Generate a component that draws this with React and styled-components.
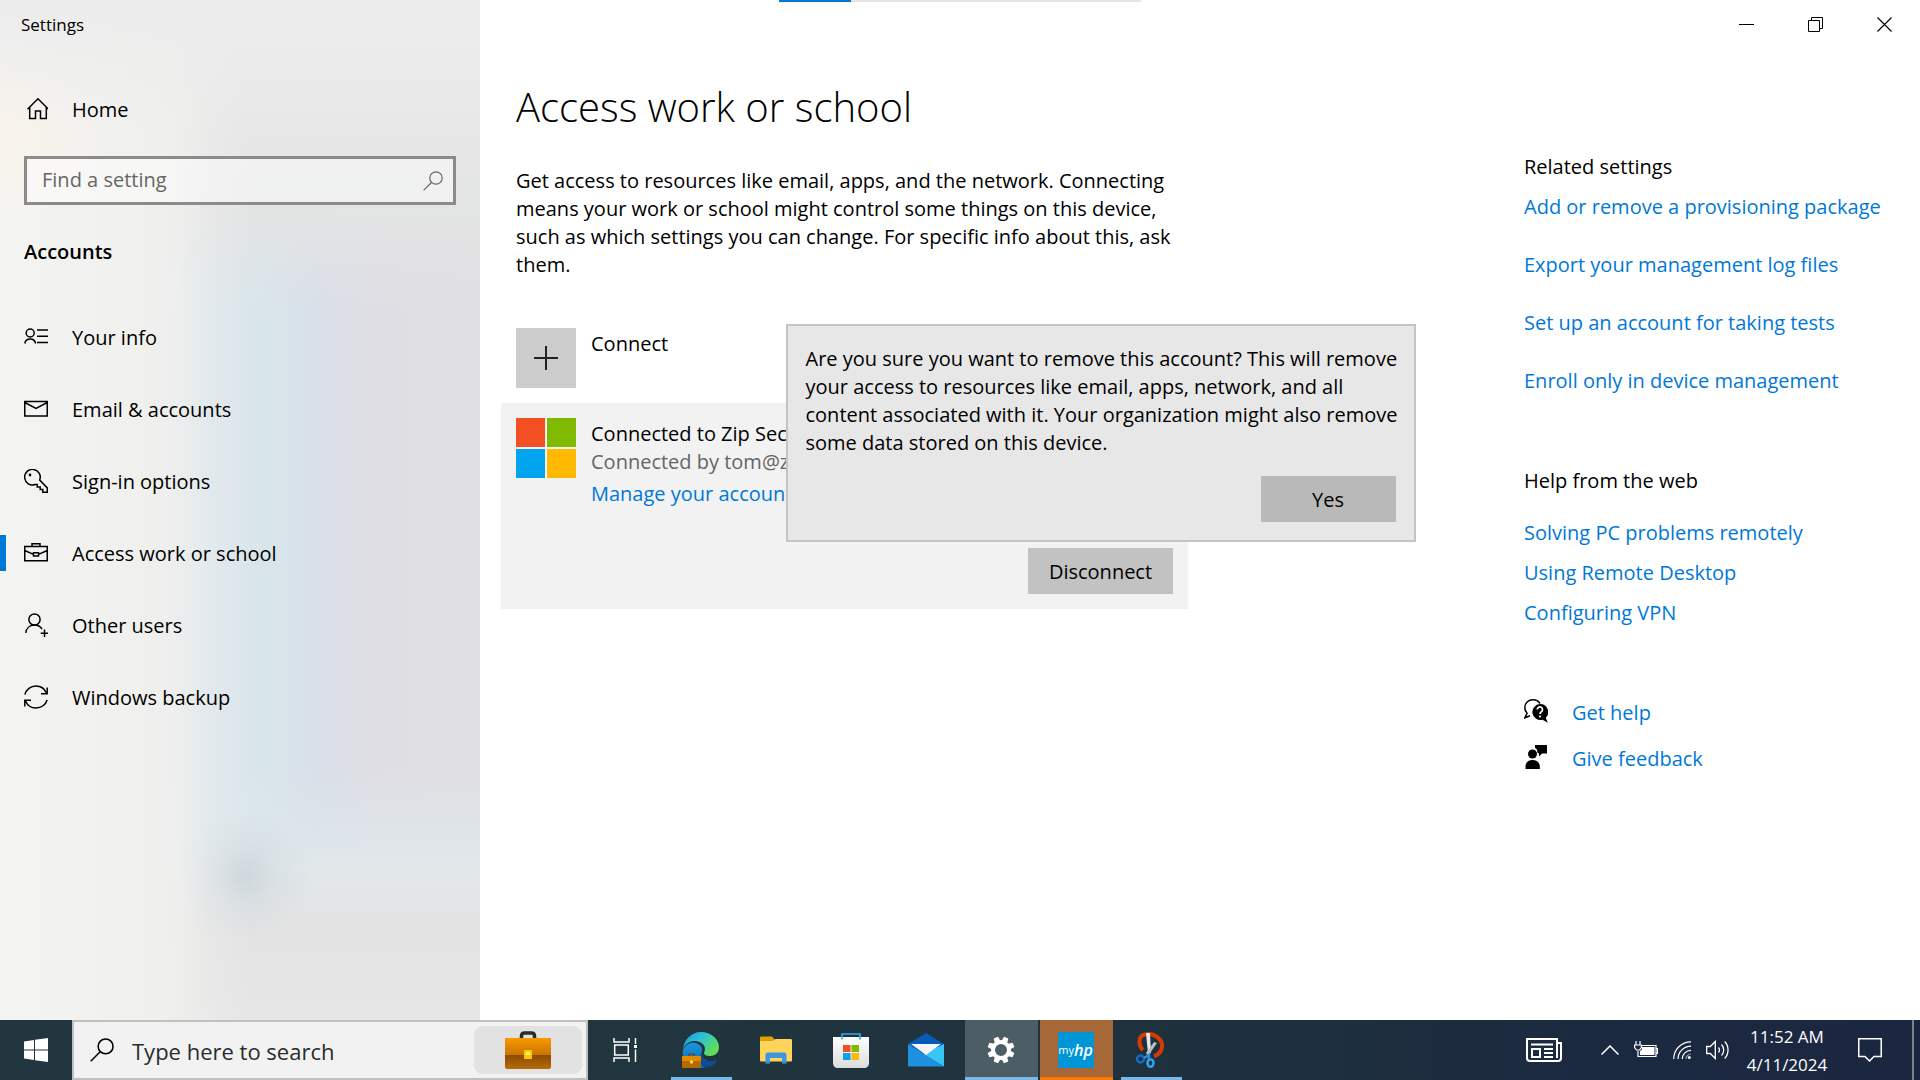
import React, { useState } from 'react';
import styled, { createGlobalStyle } from 'styled-components';

const GlobalStyle = createGlobalStyle`
  * {
    box-sizing: border-box;
  }
  body {
    margin: 0;
    background: white;
    color: black;
    font-family: 'Open Sans', 'Noto Sans', sans-serif;
    font-size: 20px;
    line-height: 28px;
  }
  h1, h2, p, ul {
    margin: 0;
    padding: 0;
    font-weight: 400;
    font-size: inherit;
  }
  ul {
    list-style: none;
  }
  a {
    color: inherit;
    text-decoration: none;
  }
  button {
    border: 0;
    padding: 0;
    font: inherit;
    color: inherit;
    background: none;
  }
  svg {
    display: block;
    flex: none;
  }
`;

const Desktop = styled.div`
  display: flex;
  flex-direction: column;
  min-height: 100vh;
`;

const SettingsWindow = styled.div`
  flex: 1;
  display: grid;
  grid-template-columns: 480px 1fr;
`;

/* ---------- sidebar ---------- */

const Sidebar = styled.aside`
  background:
    radial-gradient(ellipse 110px 80px at 0 140px, rgba(250, 243, 230, 0.7), transparent),
    linear-gradient(180deg, #ececec 0, rgba(236, 236, 236, 0.5) 70px, rgba(236, 236, 236, 0) 130px),
    linear-gradient(90deg, #f4f4f2 0, #f0f0ee 140px, rgba(240, 240, 238, 0.85) 175px, rgba(240, 240, 238, 0.3) 210px, rgba(240, 240, 238, 0) 250px),
    radial-gradient(ellipse 70px 65px at 242px 875px, rgba(196, 207, 213, 0.7), rgba(200, 211, 217, 0.3) 50%, rgba(200, 211, 217, 0)),
    linear-gradient(180deg, #ebebeb 0, #e7e7e7 130px, #e3e4e4 210px, rgba(226, 228, 230, 0) 310px),
    linear-gradient(0deg, #e6e6e6 0, #e3e3e3 95px, #e2e8ea 150px, rgba(222, 231, 236, 0.7) 185px, rgba(222, 231, 236, 0) 250px),
    linear-gradient(90deg, #dde7ed 0, #dce6ec 225px, #d8e5eb 265px, #d9dfe8 320px, #dfdee4 375px, #e0dfe2 480px);
`;
const WindowTitle = styled.div`
  display: flex;
  align-items: center;
  height: 48px;
  padding: 2px 0 0 21px;
  font-size: 17px;
`;
const NavLink = styled.a`
  position: relative;
  display: flex;
  align-items: center;
  gap: 24px;
  height: 72px;
  padding-left: 24px;
  ${(props) =>
    props.$active &&
    `
    &::before {
      content: '';
      position: absolute;
      left: 0;
      top: 18px;
      width: 6px;
      height: 36px;
      background: #0078d7;
    }
  `}
`;
const NavLabel = styled.span`
  padding-top: 2px;
`;
const HomeLink = styled(NavLink)`
  height: 48px;
  margin-top: 37px;
`;
const SearchBox = styled.label`
  display: flex;
  align-items: center;
  height: 49px;
  margin: 23px 24px;
  padding: 0 10px 0 15px;
  border: 3px solid #8b8b8b;
  background: rgba(255, 255, 255, 0.45);
  color: #666;
`;
const SearchInput = styled.input`
  flex: 1;
  min-width: 0;
  padding: 0 0 2px;
  border: 0;
  outline: 0;
  background: none;
  color: black;
  font: inherit;
  &::placeholder {
    color: #666;
    opacity: 1;
  }
`;
const SectionTitle = styled.h2`
  margin: 0 0 25px;
  padding-left: 24px;
  font-weight: 600;
  line-height: 48px;
`;

/* ---------- page ---------- */

const Page = styled.main`
  position: relative;
  min-width: 0;
`;
const Progress = styled.div`
  position: absolute;
  top: 0;
  left: 299px;
  width: 362px;
  height: 2px;
  background: #e5e5e5;
  &::before {
    content: '';
    display: block;
    width: 72px;
    height: 2px;
    background: #0078d7;
  }
`;
const WindowControls = styled.div`
  display: flex;
  justify-content: flex-end;
  height: 48px;
  padding-right: 1px;
`;
const ControlButton = styled.button`
  display: flex;
  align-items: center;
  justify-content: center;
  width: 69px;
`;
const Columns = styled.div`
  display: flex;
  justify-content: space-between;
`;
const Primary = styled.div`
  width: 687px;
  margin-left: 21px;
`;
const PageTitle = styled.h1`
  margin: 31px 15px 32px;
  font-size: 40px;
  font-weight: 300;
  line-height: 56px;
`;
const Intro = styled.p`
  padding-left: 15px;
`;
const ConnectRow = styled.div`
  display: flex;
  gap: 15px;
  margin-top: 49px;
  padding: 0 15px;
`;
const AddButton = styled.button`
  display: flex;
  align-items: center;
  justify-content: center;
  width: 60px;
  height: 60px;
  background: #ccc;
`;
const AccountCard = styled.section`
  margin-top: 15px;
  padding: 15px;
  background: #f2f2f2;
`;
const AccountRow = styled.div`
  display: flex;
  gap: 15px;
`;
const AccountText = styled.div`
  display: flex;
  flex-direction: column;
  padding-top: 2px;
`;
const Muted = styled.span`
  margin-bottom: 4px;
  color: #666;
`;
const TextLink = styled.a`
  color: #0078d7;
`;
const Actions = styled.div`
  position: relative;
  width: 145px;
  margin: 40px 0 0 auto;
`;
const ActionButton = styled.button`
  display: block;
  width: ${(props) => props.$width || '100%'};
  height: 46px;
  padding-top: 2px;
  background: ${(props) => props.$background || '#c2c2c2'};
`;
const Flyout = styled.div`
  position: absolute;
  bottom: calc(100% + 6px);
  left: 50%;
  width: 630px;
  padding: 19px 18px 18px;
  transform: translateX(-50%);
  border: 2px solid #c4c4c4;
  background: #e7e7e7;
  p {
    margin-bottom: 19px;
    white-space: nowrap;
  }
  button {
    margin-left: auto;
  }
`;
const Related = styled.aside`
  display: flex;
  flex-direction: column;
  width: 396px;
  padding-top: 105px;
`;
const LinkList = styled.ul`
  display: flex;
  flex-direction: column;
  gap: ${(props) => props.$gap};
  margin: ${(props) => props.$top} 0 72px;
  color: #0078d7;
`;
const HelpLink = styled.a`
  display: flex;
  align-items: flex-start;
  gap: 24px;
  svg {
    color: black;
  }
`;

/* ---------- taskbar ---------- */

const Taskbar = styled.footer`
  display: flex;
  height: 60px;
  color: white;
  background: linear-gradient(90deg, #21363f 0, #21363f 30%, #1e303d 65%, #1b2940 85%, #1b2740 100%);
`;
const StartButton = styled.button`
  display: flex;
  align-items: center;
  justify-content: center;
  width: 72px;
`;
const TaskSearch = styled.label`
  display: flex;
  align-items: center;
  gap: 18px;
  width: 516px;
  padding: 0 4px 0 16px;
  border: 2px solid #c0c0c0;
  background: #f2f2f2;
  color: black;
  font-size: 22px;
  input {
    padding: 2px 0 0;
  }
  input::placeholder {
    color: #2b2b2b;
  }
`;
const SearchHighlight = styled.span`
  display: flex;
  align-items: center;
  justify-content: center;
  width: 108px;
  height: 48px;
  border-radius: 9px;
  background: #e2e2e2;
`;
const Apps = styled.div`
  display: flex;
  gap: 2px;
`;
const AppButton = styled.button`
  position: relative;
  display: flex;
  align-items: center;
  justify-content: center;
  width: ${(props) => props.$width || '73px'};
  height: 60px;
  padding-right: 2px;
  background: ${(props) => props.$background || 'none'};
  &::after {
    content: '';
    position: absolute;
    left: ${(props) => (props.$background ? '0' : '6px')};
    right: ${(props) => (props.$background ? '0' : '6px')};
    bottom: 0;
    height: 3px;
    background: ${(props) => props.$line || 'transparent'};
  }
`;
const HpTile = styled.span`
  display: flex;
  align-items: center;
  justify-content: center;
  width: 36px;
  height: 36px;
  border-radius: 2px;
  background: #0096d6;
  font-size: 11px;
  line-height: 16px;
  b {
    font-size: 16px;
    font-style: italic;
    font-weight: 600;
  }
`;
const Tray = styled.div`
  display: flex;
  align-items: center;
  margin-left: auto;
`;
const TrayIcons = styled.div`
  display: flex;
  align-items: center;
  gap: 15px;
  margin-left: 39px;
`;
const Clock = styled.time`
  width: 116px;
  margin-right: 13px;
  padding-top: 1px;
  font-size: 17px;
  line-height: 28px;
  text-align: center;
`;
const ShowDesktop = styled.span`
  width: 8px;
  height: 60px;
  margin-left: 30px;
  border-left: 2px solid #7b8290;
`;

/* ---------- icons ---------- */

const Line = ({ size = 24, width = size, height = size, stroke = 1.5, children }) => (
  <svg
    width={width}
    height={height}
    viewBox={`0 0 ${width} ${height}`}
    fill="none"
    stroke="currentColor"
    strokeWidth={stroke}
    aria-hidden="true"
  >
    {children}
  </svg>
);

const HomeIcon = () => (
  <Line>
    <path d="M3.500 12.300 14 1.800 24.500 12.300M5.700 10v11.500h5.800V14h5v7.500h5.800V10" />
  </Line>
);
const InfoIcon = () => (
  <Line>
    <circle cx="6.2" cy="8" r="4" />
    <path d="M.8 18.500a5.500 5.500 0 0 1 10.800 0M13 5h11M13 11.200h11M13 17.500h11" />
  </Line>
);
const MailIcon = () => (
  <Line>
    <path d="M.75 4.500h22.500V19H.75zM.75 5.500 12 11.500l11.250-6" />
  </Line>
);
const KeyIcon = () => (
  <Line>
    <path d="M15.700 11a7.800 7.800 0 1 0-4.600 4.500h2.100v2.600h3v2.500h2.600v2.600h4.500v-4.300z" />
    <circle cx="6" cy="6" r="1.4" fill="currentColor" stroke="none" />
  </Line>
);
const WorkIcon = () => (
  <Line>
    <path d="M.75 5.500h22.500v14.300H.75zM8 5.500V2.700h8v2.800M.75 9.500l8.750 3.900M14.500 13.400l8.750-3.900M9.500 11.800h5V15h-5z" />
  </Line>
);
const UserIcon = () => (
  <Line>
    <circle cx="10.5" cy="6.5" r="5.6" />
    <path d="M1.800 20c.5-4.800 4-8 8.700-8 3.300 0 6 1.600 7.500 4M20.500 16.500V24M16.700 20.300H24" />
  </Line>
);
const SyncIcon = () => (
  <Line>
    <path d="M.9 9.500C2.200 4.500 6.600 1 12 1c4.600 0 8.700 2.900 10.500 7M23.200 2.500v6.200H17M23.100 15c-1.300 4.700-5.800 8-11.100 8-4.600 0-8.700-2.900-10.500-7M.8 21.500v-6.200H7" />
  </Line>
);
const SearchIcon = ({ size = 20, stroke = 1.2 }) => (
  <svg
    width={size}
    height={size}
    viewBox="0 0 20 20"
    fill="none"
    stroke="currentColor"
    strokeWidth={stroke}
    aria-hidden="true"
  >
    <circle cx="13" cy="7" r="6.2" />
    <path d="M8.500 11.500.6 19.400" />
  </svg>
);
const PlusIcon = () => (
  <Line stroke={2}>
    <path d="M12 0v24M0 12h24" stroke="#222" />
  </Line>
);
const MicrosoftLogo = () => (
  <svg width="60" height="60" viewBox="0 0 60 60" aria-hidden="true">
    <path fill="#f25022" d="M0 0h29v29H0z" />
    <path fill="#7fba00" d="M31 0h29v29H31z" />
    <path fill="#00a4ef" d="M0 31h29v29H0z" />
    <path fill="#ffb900" d="M31 31h29v29H31z" />
  </svg>
);
const HelpIcon = () => (
  <svg width="24" height="24" viewBox="0 0 24 24" aria-hidden="true">
    <path
      d="M16 4.500C14.500 2 12 .8 8.800.8 4.300.8.800 4 .8 8.500c0 2.300.9 4.300 2.300 5.700L.8 18.800l5.200-2"
      fill="none"
      stroke="currentColor"
      strokeWidth="1.5"
    />
    <path d="M16 5a8 8 0 1 0 2.500 15.700l5.300 3-2-5A8 8 0 0 0 16 5z" fill="currentColor" />
    <path
      d="M13.300 10.500a2.600 2.600 0 1 1 4 2.200c-1 .6-1.300 1-1.300 2.200M16 16.500v2"
      fill="none"
      stroke="white"
      strokeWidth="1.7"
    />
  </svg>
);
const FeedbackIcon = () => (
  <svg width="24" height="24" viewBox="0 0 24 24" fill="currentColor" aria-hidden="true">
    <circle cx="8.5" cy="9" r="4.5" />
    <path d="M1.500 24v-2.500c0-3.800 2.700-6.500 7-6.500s7.300 2.700 7.300 6.500V24zM11 0h12v8.500h-5L15 11.500v-3L13.500 8c0-3-1-4.500-2.500-5z" />
  </svg>
);
const WindowsIcon = () => (
  <svg width="24" height="24" viewBox="0 0 24 24" fill="white" aria-hidden="true">
    <path d="M0 3.400 10 2v9.500H0zM11 1.800 24 0v11.500H11zM0 12.500h10V22L0 20.600zM11 12.500h13V24l-13-1.800z" />
  </svg>
);
const BriefcaseIcon = () => (
  <svg width="46" height="38" viewBox="0 0 46 38" aria-hidden="true">
    <defs>
      <linearGradient id="caseTop" x2="0" y2="1">
        <stop stopColor="#f99a00" />
        <stop offset="1" stopColor="#c87400" />
      </linearGradient>
      <linearGradient id="caseBottom" x2="0" y2="1">
        <stop offset=".5" stopColor="#8a4600" />
        <stop offset="1" stopColor="#b66a05" />
      </linearGradient>
    </defs>
    <path d="M16.500 8V5c0-2 1-3 3-3h7c2 0 3 1 3 3v3" fill="none" stroke="#2b2b2e" strokeWidth="3.5" />
    <rect y="7" width="46" height="31" rx="2" fill="url(#caseBottom)" />
    <path d="M0 24V9c0-1.200.8-2 2-2h42c1.200 0 2 .8 2 2v15z" fill="url(#caseTop)" />
    <rect x="19" y="19" width="8" height="9" rx="1" fill="#f5cc00" />
    <rect x="21" y="21" width="4" height="3" fill="#fff07a" />
  </svg>
);
const TaskViewIcon = () => (
  <Line>
    <path d="M1 0v4h15V0M1 24v-4h15v4M1.700 7h13.600v10H1.700zM22.500 0v6M22.500 11.500V24" />
    <path d="M21 7h3v3h-3z" fill="currentColor" stroke="none" />
  </Line>
);
const EdgeIcon = () => (
  <svg width="38" height="36" viewBox="0 0 38 36" aria-hidden="true">
    <defs>
      <linearGradient id="edgeSwirl" x1="0" y1="0" x2="1" y2=".6">
        <stop stopColor="#1796d8" />
        <stop offset=".5" stopColor="#2fc2d4" />
        <stop offset="1" stopColor="#62df50" />
      </linearGradient>
      <linearGradient id="edgeBody" x2="0" y2="1">
        <stop stopColor="#1a98df" />
        <stop offset="1" stopColor="#0d62b2" />
      </linearGradient>
    </defs>
    <path d="M13 22c0 8 7 13 14 13 4-1 7-4 8-7-7 3-14 0-15-6z" fill="#0f4c98" />
    <path d="M1 18C4 11 11 9 16 12c4 2 5 6 3 10-3 5-1 11 5 14-8 1-14 0-19-5-4-4-5-9-4-13z" fill="url(#edgeBody)" />
    <path
      d="M1 17C2 7 10 0 19 0c10 0 18 7 18 15 0 6-4 9-9 9-4 0-6-1-6-3 0-1 1-2 1-4 0-4-4-8-10-8C7 9 3 12 1 17z"
      fill="url(#edgeSwirl)"
    />
    <rect y="24" width="19" height="12" rx="1" fill="#b56a00" />
    <path d="M0 25c0-.6.4-1 1-1h17c.6 0 1 .4 1 1v4H0z" fill="#e08a00" />
    <circle cx="9.5" cy="30" r="1.7" fill="#ffd75a" />
    <path d="M7 24v-2h5v2" fill="none" stroke="#6b3c00" strokeWidth="1.2" />
  </svg>
);
const FolderIcon = () => (
  <svg width="32" height="28" viewBox="0 0 32 28" aria-hidden="true">
    <path d="M0 6V2C0 1 .5.500 1.500.500H12L15 4v3z" fill="#e0a100" />
    <path d="M0 5h13l2.500-2h15c1 0 1.500.5 1.500 1.500V24c0 1-.5 1.500-1.500 1.500h-29C.5 25.500 0 25 0 24z" fill="#ffd45c" />
    <path d="M5.500 27.500V19c0-1.500 1-2.500 2.500-2.500h16c1.500 0 2.500 1 2.500 2.500v8.500H22V22H10v5.500z" fill="#3d97de" />
  </svg>
);
const StoreIcon = () => (
  <svg width="36" height="36" viewBox="0 0 36 36" aria-hidden="true">
    <defs>
      <linearGradient id="storeBag" x2="0" y2="1">
        <stop stopColor="#fff" />
        <stop offset="1" stopColor="#dcdcdc" />
      </linearGradient>
    </defs>
    <path d="M0 5h36v26c0 3-2 5-5 5H5c-3 0-5-2-5-5z" fill="url(#storeBag)" />
    <path d="M9 7.500V2h18v5.500" fill="none" stroke="#35a9e8" strokeWidth="1.7" />
    <path d="M10 13h7.500v7H10z" fill="#f25022" />
    <path d="M18.500 13H26v7h-7.500z" fill="#7fba00" />
    <path d="M10 21h7.500v7H10z" fill="#00a4ef" />
    <path d="M18.500 21H26v7h-7.500z" fill="#ffb900" />
  </svg>
);
const MailAppIcon = () => (
  <svg width="36" height="34" viewBox="0 0 36 34" aria-hidden="true">
    <path d="M0 11 18 0l18 11v8H0z" fill="#0a5bb5" />
    <path d="M36 11v22.500L15 21z" fill="#38c6f4" />
    <path d="M0 11v22.500h36z" fill="#1e90e0" />
    <path d="M3 11h30L18 22z" fill="#f4f6f9" />
  </svg>
);
const GearIcon = () => (
  <svg width="28" height="28" viewBox="-14 -14 28 28" aria-hidden="true">
    <circle r="8" fill="none" stroke="white" strokeWidth="4" />
    {[22.5, 67.5, 112.5, 157.5, 202.5, 247.5, 292.5, 337.5].map((angle) => (
      <path key={angle} d="M-3-9-2.300-13.500h4.600L3-9z" fill="white" transform={`rotate(${angle})`} />
    ))}
  </svg>
);
const SnipIcon = () => (
  <svg width="30" height="36" viewBox="0 0 30 36" fill="none" aria-hidden="true">
    <path d="M7 18C2 13 2 4 9 2.500c9-2 18 5 17 12.500-.5 5-4 8-8 9" stroke="#d83b01" strokeWidth="4" />
    <path d="M10 1h4l1 20-3 1z" fill="#e3e6ea" />
    <path d="m21 11-9 13-2-3 8-11z" fill="#b9bfc8" />
    <circle cx="4.5" cy="27" r="3.5" stroke="#1769c4" strokeWidth="2.5" />
    <ellipse cx="14.5" cy="31" rx="3" ry="3.8" stroke="#2aa6ef" strokeWidth="2.5" />
    <path d="m8 26 5-3v4" stroke="#2a8fe0" strokeWidth="2.5" />
  </svg>
);
const NewsIcon = () => (
  <Line width={36} height={24} stroke={2}>
    <path d="M31 20V1H1v19c0 2 1 3 3 3h28c2 0 3-1 3-3V5h-4M5 6.500h22M18 11h9M18 15h9M18 19h9M6 11h8v8H6z" />
  </Line>
);
const ChevronIcon = () => (
  <Line width={18} height={10}>
    <path d="M.5 9.500 9 1l8.500 8.500" />
  </Line>
);
const BatteryIcon = () => (
  <Line width={24} height={18} stroke={1.2}>
    <path d="M7 4.500h15v11H4V10M22.500 7.500h1v5h-1" />
    <path d="M8 6h12.500v8H6v-4l2-1.500z" fill="currentColor" stroke="none" />
    <path d="M2 0v4M6 0v4M.6 4h6.800v2.500L5.500 9h-3L.6 6.500z" fill="#1b2940" />
  </Line>
);
const WifiIcon = () => (
  <Line width={18} height={18} stroke={1.2}>
    <path d="M.8 18A17 17 0 0 1 18 .8M5 18A13 13 0 0 1 18 5.200M9.300 18A8.700 8.700 0 0 1 18 9.300" />
    <path d="M13 18a5 5 0 0 1 5-5" opacity=".5" />
    <circle cx="16.3" cy="16.5" r="1.5" fill="currentColor" stroke="none" />
  </Line>
);
const VolumeIcon = () => (
  <Line width={23} height={20} stroke={1.3}>
    <path d="M.7 6.500h3.600l5-5v17l-5-5H.7zM12.500 7.500a4 4 0 0 1 0 5M15.500 4.500a8 8 0 0 1 0 11M18.700 1.500a12.500 12.500 0 0 1 0 17" />
  </Line>
);
const ActionIcon = () => (
  <Line>
    <path d="M.75.75h22.500V18.500H16L11.500 23 7 18.500H.75z" />
  </Line>
);

const navItems = [
  { label: 'Your info', icon: <InfoIcon /> },
  { label: 'Email & accounts', icon: <MailIcon /> },
  { label: 'Sign-in options', icon: <KeyIcon /> },
  { label: 'Access work or school', icon: <WorkIcon /> },
  { label: 'Other users', icon: <UserIcon /> },
  { label: 'Windows backup', icon: <SyncIcon /> },
];

const relatedLinks = [
  'Add or remove a provisioning package',
  'Export your management log files',
  'Set up an account for taking tests',
  'Enroll only in device management',
];

const webLinks = ['Solving PC problems remotely', 'Using Remote Desktop', 'Configuring VPN'];

const apps = [
  { name: 'Task View', icon: <TaskViewIcon />, width: '75px' },
  { name: 'Microsoft Edge', icon: <EdgeIcon />, line: '#76b9ed' },
  { name: 'File Explorer', icon: <FolderIcon /> },
  { name: 'Microsoft Store', icon: <StoreIcon /> },
  { name: 'Mail', icon: <MailAppIcon /> },
  { name: 'Settings', icon: <GearIcon />, line: '#76b9ed', background: '#4d5d65' },
  {
    name: 'myHP',
    icon: (
      <HpTile>
        my<b>hp</b>
      </HpTile>
    ),
    line: '#ff7800',
    background: '#a76839',
  },
  { name: 'Snipping Tool', icon: <SnipIcon />, line: '#76b9ed' },
];

const App = () => {
  const [active, setActive] = useState('Access work or school');
  const [isConfirming, setIsConfirming] = useState(true);

  return (
    <Desktop>
      <GlobalStyle />
      <SettingsWindow>
        <Sidebar>
          <WindowTitle>Settings</WindowTitle>
          <HomeLink href="#home">
            <HomeIcon />
            <NavLabel>Home</NavLabel>
          </HomeLink>
          <SearchBox>
            <SearchInput placeholder="Find a setting" aria-label="Find a setting" />
            <SearchIcon />
          </SearchBox>
          <SectionTitle>Accounts</SectionTitle>
          <nav>
            {navItems.map(({ label, icon }) => (
              <NavLink key={label} href="#settings" $active={label === active} onClick={() => setActive(label)}>
                {icon}
                <NavLabel>{label}</NavLabel>
              </NavLink>
            ))}
          </nav>
        </Sidebar>

        <Page>
          <Progress />
          <WindowControls>
            <ControlButton aria-label="Minimize">
              <Line size={15} stroke={1}>
                <path d="M0 7.500h15" />
              </Line>
            </ControlButton>
            <ControlButton aria-label="Restore">
              <Line size={15} stroke={1}>
                <path d="M.5 3.500h11v11H.5zM3.500 3.500v-3h11v11h-3" />
              </Line>
            </ControlButton>
            <ControlButton aria-label="Close">
              <Line size={15} stroke={1.2}>
                <path d="m.5.5 14 14M14.500.5l-14 14" />
              </Line>
            </ControlButton>
          </WindowControls>
          <Columns>
            <Primary>
              <PageTitle>Access work or school</PageTitle>
              <Intro>
                Get access to resources like email, apps, and the network. Connecting means your work or school might
                control some things on this device, such as which settings you can change. For specific info about
                this, ask them.
              </Intro>
              <ConnectRow>
                <AddButton aria-label="Connect">
                  <PlusIcon />
                </AddButton>
                <AccountText>Connect</AccountText>
              </ConnectRow>
              <AccountCard>
                <AccountRow>
                  <MicrosoftLogo />
                  <AccountText>
                    <span>Connected to Zip Security</span>
                    <Muted>Connected by tom@zipsec.com</Muted>
                    <TextLink href="#manage">Manage your account</TextLink>
                  </AccountText>
                </AccountRow>
                <Actions>
                  <ActionButton onClick={() => setIsConfirming(true)}>Disconnect</ActionButton>
                  {isConfirming && (
                    <Flyout role="dialog" aria-label="Remove account">
                      <p>
                        Are you sure you want to remove this account? This will remove
                        <br />
                        your access to resources like email, apps, network, and all
                        <br />
                        content associated with it. Your organization might also remove
                        <br />
                        some data stored on this device.
                      </p>
                      <ActionButton $width="135px" $background="#b9b9b9" onClick={() => setIsConfirming(false)}>
                        Yes
                      </ActionButton>
                    </Flyout>
                  )}
                </Actions>
              </AccountCard>
            </Primary>

            <Related>
              <h2>Related settings</h2>
              <LinkList $gap="30px" $top="12px">
                {relatedLinks.map((link) => (
                  <li key={link}>
                    <a href="#related">{link}</a>
                  </li>
                ))}
              </LinkList>
              <h2>Help from the web</h2>
              <LinkList $gap="12px" $top="24px">
                {webLinks.map((link) => (
                  <li key={link}>
                    <a href="#web">{link}</a>
                  </li>
                ))}
              </LinkList>
              <LinkList $gap="18px" $top="0">
                <li>
                  <HelpLink href="#help">
                    <HelpIcon />
                    Get help
                  </HelpLink>
                </li>
                <li>
                  <HelpLink href="#feedback">
                    <FeedbackIcon />
                    Give feedback
                  </HelpLink>
                </li>
              </LinkList>
            </Related>
          </Columns>
        </Page>
      </SettingsWindow>

      <Taskbar>
        <StartButton aria-label="Start">
          <WindowsIcon />
        </StartButton>
        <TaskSearch>
          <SearchIcon size={24} stroke={1.3} />
          <SearchInput placeholder="Type here to search" aria-label="Type here to search" />
          <SearchHighlight>
            <BriefcaseIcon />
          </SearchHighlight>
        </TaskSearch>
        <Apps>
          {apps.map(({ name, icon, line, background, width }) => (
            <AppButton key={name} aria-label={name} $line={line} $background={background} $width={width}>
              {icon}
            </AppButton>
          ))}
        </Apps>
        <Tray>
          <NewsIcon />
          <TrayIcons>
            <ChevronIcon />
            <BatteryIcon />
            <WifiIcon />
            <VolumeIcon />
          </TrayIcons>
          <Clock>
            11:52 AM
            <br />
            4/11/2024
          </Clock>
          <ActionIcon />
          <ShowDesktop />
        </Tray>
      </Taskbar>
    </Desktop>
  );
};

export default App;
